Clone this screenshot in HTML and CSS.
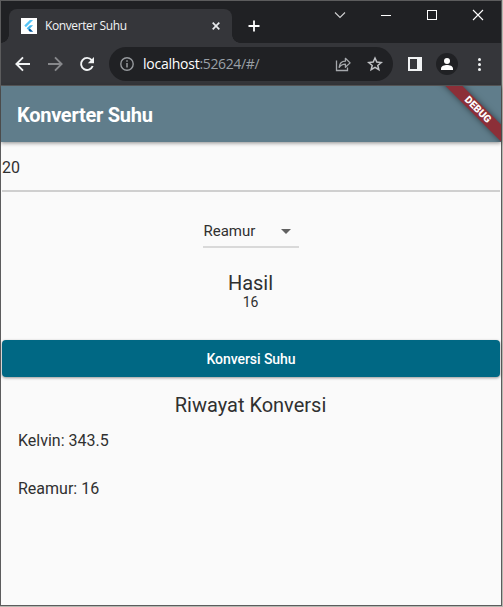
FILE: index.html
```html
<!DOCTYPE html>
<html lang="id">
<head>
<meta charset="utf-8">
<title>Konverter Suhu</title>
<link rel="stylesheet" href="styles.css">
</head>
<body>
<div class="window">
  <header class="tabstrip">
    <div class="tab">
      <svg class="favicon" width="16" height="16" viewBox="0 0 16 16"><rect width="16" height="16" fill="#fff"/><path d="M8.900 2h3.200L4.900 9.200 3.300 7.600z" fill="#54c5f8"/><path d="M8.900 7.300h3.200L8.900 10.400 7.300 12 5.700 10.300z" fill="#40b6ee"/><path d="M7.300 12l1.600-1.600 3.200 3.400H8.900z" fill="#01579b"/></svg>
      <span class="tab-title">Konverter Suhu</span>
      <svg class="tab-close" width="8" height="8" viewBox="0 0 8 8"><path d="M.7.7l6.6 6.6M7.3.7L.7 7.3" stroke="#e8eaed" stroke-width="1.7"/></svg>
    </div>
    <svg class="new-tab" width="12" height="12" viewBox="0 0 12 12"><path d="M6 .5v11M.5 6h11" stroke="#fff" stroke-width="1.8"/></svg>
    <div class="controls">
      <svg width="46" height="30" viewBox="0 0 46 30"><path d="M18 11.500l5 5 5-5" fill="none" stroke="#d0d1d2" stroke-width="1.1"/></svg>
      <svg width="46" height="30" viewBox="0 0 46 30"><path d="M18 14.5h10" stroke="#fff"/></svg>
      <svg width="46" height="30" viewBox="0 0 46 30"><rect x="18.5" y="9.5" width="9" height="9" fill="none" stroke="#fff"/></svg>
      <svg width="46" height="30" viewBox="0 0 46 30"><path d="M18 9l10 10M28 9L18 19" stroke="#fff" stroke-width="1.1"/></svg>
    </div>
  </header>
  <nav class="toolbar">
    <svg width="32" height="32" viewBox="0 0 32 32"><path d="M23 16H10M16 9.4L9.4 16l6.6 6.6" fill="none" stroke="#f1f3f4" stroke-width="1.9"/></svg>
    <svg width="32" height="32" viewBox="0 0 32 32"><path d="M9 16h13M16 9.4l6.6 6.6-6.6 6.6" fill="none" stroke="#87888b" stroke-width="1.9"/></svg>
    <svg width="32" height="32" viewBox="0 0 32 32"><path d="M20.7 12.1A6 6 0 1 0 21.7 18" fill="none" stroke="#f1f3f4" stroke-width="1.9"/><path d="M23 9v6.2h-6.2z" fill="#f1f3f4"/></svg>
    <div class="omnibox">
      <svg width="32" height="32" viewBox="0 0 32 32"><circle cx="16" cy="16" r="6.2" fill="none" stroke="#96999d" stroke-width="1.4"/><path d="M16 15v4.4M16 12.2v1.6" stroke="#96999d" stroke-width="1.5"/></svg>
      <span class="url"><span class="host">localhost</span>:52624/#/</span>
      <svg width="32" height="32" viewBox="0 0 32 32"><path d="M9.500 12.500v10h11v-3" fill="none" stroke="#a5a8ac" stroke-width="1.3"/><path d="M12.200 19.400c.3-4 2.300-6.200 6.200-6.200v-2.900l4.700 4.600-4.700 4.400v-3.100c-2.800 0-4.700.8-6.200 3.200z" fill="none" stroke="#a5a8ac" stroke-width="1.3" stroke-linejoin="round"/></svg>
      <svg width="32" height="32" viewBox="0 0 32 32"><path d="M16 10l1.8 4.100 4.400.4-3.400 2.900 1.050 4.300L16 19.400l-3.850 2.300 1.050-4.300-3.400-2.900 4.400-.4z" fill="none" stroke="#bfc1c4" stroke-width="1.5"/></svg>
    </div>
    <svg width="32" height="32" viewBox="0 0 32 32"><path fill-rule="evenodd" d="M9 9h14v14H9zM11 11v10h7V11z" fill="#f1f3f4"/></svg>
    <svg width="32" height="32" viewBox="0 0 32 32"><circle cx="16" cy="16" r="11" fill="#202124"/><circle cx="16" cy="13" r="3" fill="#fff"/><path d="M10 22v-1.500c0-2.400 3.500-3.500 6-3.500s6 1.100 6 3.500V22z" fill="#fff"/></svg>
    <svg width="32" height="32" viewBox="0 0 32 32" fill="#f1f3f4"><circle cx="16.500" cy="11.500" r="1.500"/><circle cx="16.500" cy="16.500" r="1.500"/><circle cx="16.500" cy="21.500" r="1.500"/></svg>
  </nav>
  <main class="page">
    <div class="appbar"><h1>Konverter Suhu</h1></div>
    <div class="banner-clip"><div class="banner"><span>DEBUG</span></div></div>
    <div class="field">20</div>
    <div class="select"><span>Reamur</span><svg width="10" height="5" viewBox="0 0 10 5"><path d="M0 0h10L5 5z" fill="#616161"/></svg></div>
    <div class="result-label">Hasil</div>
    <div class="result">16</div>
    <button class="convert">Konversi Suhu</button>
    <h2>Riwayat Konversi</h2>
    <ul class="history"><li>Kelvin: 343.5</li><li>Reamur: 16</li></ul>
  </main>
</div>
</body>
</html>
```
FILE: styles.css
```css
* { box-sizing: border-box; }
body { margin: 0; width: 503px; height: 607px; background: #b5b8b0; overflow: hidden; }
svg { display: block; flex: none; }
.window {
  width: 502px; height: 606px;
  border: 1px solid #5c5c5d;
  background: #fafafa;
  font-family: Roboto, sans-serif;
  color: #303030;
}
.tabstrip { display: flex; height: 42px; background: #202124; padding-left: 8px; }
.tab {
  position: relative;
  display: flex; align-items: center;
  width: 223px; height: 34px; margin-top: 8px;
  padding: 0 12px;
  background: #35363a;
  border-radius: 8px 8px 0 0;
}
.tab::before, .tab::after {
  content: ""; position: absolute; bottom: 0; width: 8px; height: 8px;
}
.tab::before { left: -8px; background: radial-gradient(circle at 0 0, #202124 7.5px, #35363a 8px); }
.tab::after { right: -8px; background: radial-gradient(circle at 100% 0, #202124 7.5px, #35363a 8px); }
.tab-title {
  margin-left: 8px;
  font: 12px/16px "Open Sans", sans-serif;
  letter-spacing: -0.4px;
  color: #f1f3f4;
}
.tab-close { margin-left: auto; }
.new-tab { margin: 19px 0 0 16px; }
.controls { display: flex; margin-left: auto; }
.toolbar { display: flex; align-items: center; height: 42px; padding: 0 6px; background: #35363a; }
.omnibox {
  display: flex; align-items: center;
  width: 284px; height: 34px; margin: 0 6px; padding: 0 2px;
  border-radius: 17px; background: #202124;
}
.url { flex: 1; font: 14px/20px "Open Sans", sans-serif; letter-spacing: -0.35px; color: #9aa0a6; }
.host { color: #fff; letter-spacing: -0.25px; }
.page { position: relative; height: 521px; border-top: 1px solid #5c5c5d; }
.appbar {
  display: flex; align-items: center;
  height: 56px; padding: 2px 16px 0;
  background: #607d8b;
  box-shadow: 0 1px 4px rgba(0, 0, 0, .45);
}
h1 { margin: 0; font-size: 20px; line-height: 24px; font-weight: 700; letter-spacing: -0.27px; color: #fff; }
.banner-clip { position: absolute; top: 0; right: 0; width: 70px; height: 56px; overflow: hidden; }
.banner {
  position: absolute; left: -5px; top: 16px;
  display: flex; align-items: center; justify-content: center;
  width: 100px; height: 12px; padding-left: 5px;
  transform: rotate(45deg);
  background: #8c2f38;
  box-shadow: 0 0 6px rgba(0, 0, 0, .5);
  color: #fff; font-size: 10.2px; font-weight: 900; line-height: 12px;
}
.field {
  height: 49px; margin: 1px 1px 0; padding-top: 15px;
  border-bottom: 2px solid #cfcfcf;
  font-size: 16px; line-height: 20px;
}
.select {
  display: flex; align-items: center; justify-content: space-between;
  width: 96px; height: 32px; margin: 24px auto 0; padding: 0 8px 0 0.5px;
  border-bottom: 2px solid #d9d9d9;
  font-size: 15px;
}
.result-label { margin-top: 24px; padding-right: 1px; text-align: center; font-size: 20px; line-height: 23px; }
.result { padding-right: 1px; margin-top: -1px; text-align: center; font-size: 14px; line-height: 17px; }
.convert {
  display: block; width: 498px; height: 37px; margin: 29px 1px 0; padding: 0;
  border: 0; border-radius: 4px;
  background: #006884; color: #fff;
  font: 500 14px/16px Roboto, sans-serif;
  letter-spacing: -0.05px;
  box-shadow: 0 1px 3px rgba(0, 0, 0, .4);
}
h2 { margin: 16px 0 0; padding-right: 1px; text-align: center; font-size: 20px; font-weight: 400; line-height: 24px; }
.history { margin: 0; padding: 0 17px; list-style: none; font-size: 16px; line-height: 48px; }
```
